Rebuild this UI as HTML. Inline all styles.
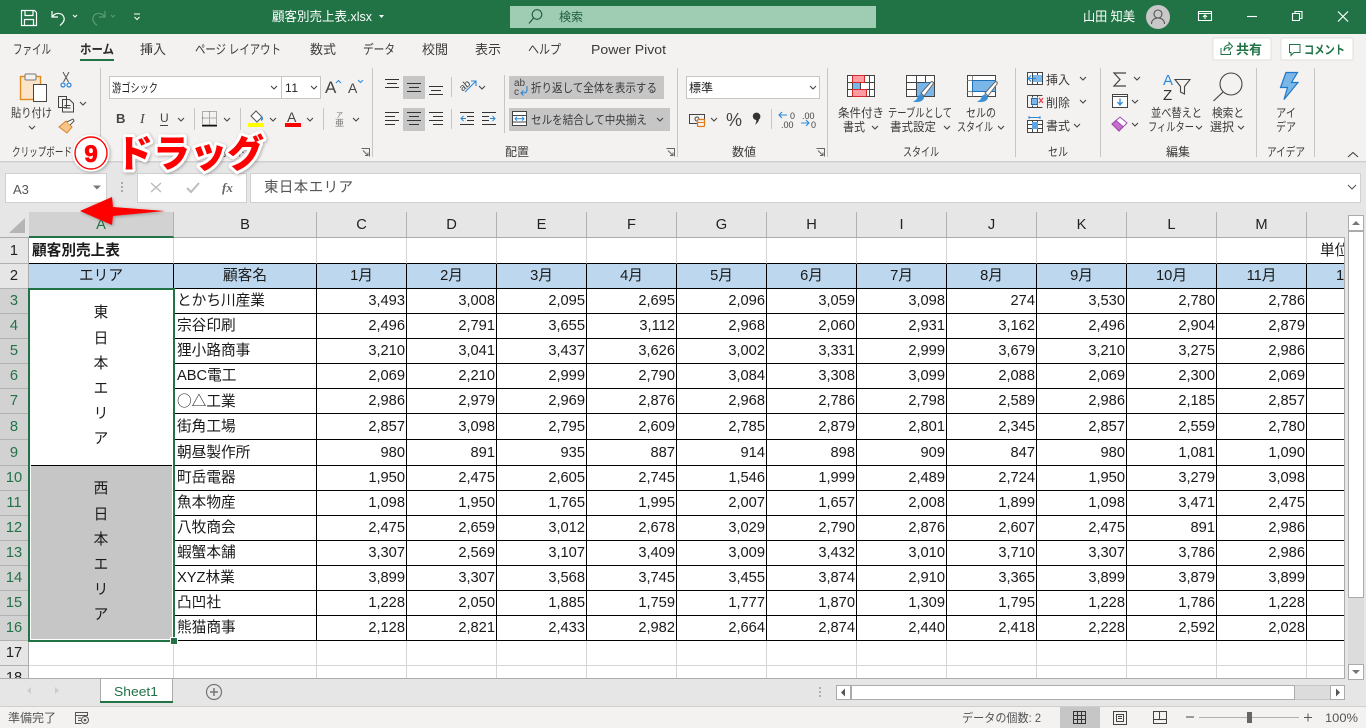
<!DOCTYPE html>
<html lang="ja"><head><meta charset="utf-8"><title>顧客別売上表.xlsx - Excel</title>
<style>
*{box-sizing:border-box}
html,body{margin:0;padding:0}
body{width:1366px;height:728px;overflow:hidden;position:relative;background:#e6e6e6;font-family:"Liberation Sans","Noto Sans CJK JP",sans-serif;color:#222}
.abs{position:absolute}
#ribbon,#over{position:absolute;left:0;top:0}
#ribbon text{font-family:"Liberation Sans","Noto Sans CJK JP",sans-serif;font-size:12px;fill:#3b3a39}
#ribbon text.tb{font-size:13px}
#clip{position:absolute;left:29px;top:238px;width:1315px;height:440px;overflow:hidden;background:#fff}
table{border-collapse:separate;border-spacing:0;table-layout:fixed;font-size:14.67px}
#g{width:1368px}
#g td{padding:0 1px 0 0;height:25px;line-height:24px;border-right:1px solid #d4d4d4;border-bottom:1px solid #d4d4d4;text-align:right;white-space:nowrap;overflow:hidden;color:#1a1a1a}
#g tr.k td{border-color:#000}
#g tr.r1 td{border-bottom-color:#000;height:26px;line-height:24px;padding-top:1px}
#g tr.t td{height:26px;line-height:24px;padding-top:1px}
#g td.l{text-align:left;padding-left:3px}
#g td.c{text-align:center;padding:0;background:#bdd7ee}
#g td.m{text-align:center;padding:0;line-height:25.2px;vertical-align:middle;white-space:normal}
#g td.m div{position:relative;top:0}
#rh{position:absolute;left:0;top:238px;width:29px;font-size:14.67px}
#rh div{height:25px;line-height:24px;text-align:center;border-bottom:1px solid #b1b1b1;background:#e6e6e6;color:#222;border-right:1px solid #ababab;width:29px}
#rh div.s{background:#d2d2d2;color:#217346}
#ch{position:absolute;left:0;top:212px;height:26px;width:1345px;background:#e6e6e6;border-bottom:1px solid #ababab}
#ch span{position:absolute;top:0;height:25px;line-height:27px;text-align:center;font-size:14.67px;border-right:1px solid #b1b1b1;color:#222}
#sel{position:absolute;left:28px;top:288px;width:147px;height:354px;border:2px solid #217346;box-shadow:inset 0 0 0 1px #fff}
#hd{position:absolute;left:171px;top:638px;width:6px;height:6px;background:#217346;outline:1px solid #fff}
</style></head>
<body>
<div id="ch">
<span style="left:29px;width:145px;background:#d2d2d2;color:#217346;height:26px;border-bottom:2px solid #217346">A</span>
<span style="left:174px;width:143px">B</span><span style="left:317px;width:90px">C</span><span style="left:407px;width:90px">D</span><span style="left:497px;width:90px">E</span><span style="left:587px;width:90px">F</span><span style="left:677px;width:90px">G</span><span style="left:767px;width:90px">H</span><span style="left:857px;width:90px">I</span><span style="left:947px;width:90px">J</span><span style="left:1037px;width:90px">K</span><span style="left:1127px;width:90px">L</span><span style="left:1217px;width:90px">M</span>
</div>
<div id="rh">
<div style="height:26px;line-height:26px">1</div><div>2</div>
<div class="s">3</div><div class="s">4</div><div class="s">5</div><div class="s">6</div><div class="s">7</div><div class="s" style="height:26px;line-height:26px">8</div><div class="s" style="height:26px;line-height:26px">9</div><div class="s">10</div><div class="s">11</div><div class="s">12</div><div class="s">13</div><div class="s">14</div><div class="s">15</div><div class="s">16</div><div>17</div><div style="height:13px;overflow:hidden;border:0;border-right:1px solid #ababab">18</div>
</div>
<div id="clip">
<table id="g"><colgroup><col style="width:145px"><col style="width:143px"><col style="width:90px"><col style="width:90px"><col style="width:90px"><col style="width:90px"><col style="width:90px"><col style="width:90px"><col style="width:90px"><col style="width:90px"><col style="width:90px"><col style="width:90px"><col style="width:90px"><col style="width:90px"></colgroup>
<tr class="r1"><td class="l" style="font-weight:bold">顧客別売上表<td><td><td><td><td><td><td><td><td><td><td><td><td class="l" style="padding-left:13px">単位：千円
<tr class="k"><td class="c">エリア<td class="c">顧客名<td class="c">1月<td class="c">2月<td class="c">3月<td class="c">4月<td class="c">5月<td class="c">6月<td class="c">7月<td class="c">8月<td class="c">9月<td class="c">10月<td class="c">11月<td class="c">12月
<tr class="k"><td class="m" rowspan="7"><div>東<br>日<br>本<br>エ<br>リ<br>ア</div><td class="l">とかち川産業<td>3,493<td>3,008<td>2,095<td>2,695<td>2,096<td>3,059<td>3,098<td>274<td>3,530<td>2,780<td>2,786<td>
<tr class="k"><td class="l">宗谷印刷<td>2,496<td>2,791<td>3,655<td>3,112<td>2,968<td>2,060<td>2,931<td>3,162<td>2,496<td>2,904<td>2,879<td>
<tr class="k"><td class="l">狸小路商事<td>3,210<td>3,041<td>3,437<td>3,626<td>3,002<td>3,331<td>2,999<td>3,679<td>3,210<td>3,275<td>2,986<td>
<tr class="k"><td class="l">ABC電工<td>2,069<td>2,210<td>2,999<td>2,790<td>3,084<td>3,308<td>3,099<td>2,088<td>2,069<td>2,300<td>2,069<td>
<tr class="k"><td class="l" style="font-family:'Noto Sans CJK JP',sans-serif">○△工業<td>2,986<td>2,979<td>2,969<td>2,876<td>2,968<td>2,786<td>2,798<td>2,589<td>2,986<td>2,185<td>2,857<td>
<tr class="k t"><td class="l">街角工場<td>2,857<td>3,098<td>2,795<td>2,609<td>2,785<td>2,879<td>2,801<td>2,345<td>2,857<td>2,559<td>2,780<td>
<tr class="k t"><td class="l">朝昼製作所<td>980<td>891<td>935<td>887<td>914<td>898<td>909<td>847<td>980<td>1,081<td>1,090<td>
<tr class="k"><td class="m" rowspan="7" style="background:#c6c6c6"><div>西<br>日<br>本<br>エ<br>リ<br>ア</div><td class="l">町岳電器<td>1,950<td>2,475<td>2,605<td>2,745<td>1,546<td>1,999<td>2,489<td>2,724<td>1,950<td>3,279<td>3,098<td>
<tr class="k"><td class="l">魚本物産<td>1,098<td>1,950<td>1,765<td>1,995<td>2,007<td>1,657<td>2,008<td>1,899<td>1,098<td>3,471<td>2,475<td>
<tr class="k"><td class="l">八牧商会<td>2,475<td>2,659<td>3,012<td>2,678<td>3,029<td>2,790<td>2,876<td>2,607<td>2,475<td>891<td>2,986<td>
<tr class="k"><td class="l">蝦蟹本舗<td>3,307<td>2,569<td>3,107<td>3,409<td>3,009<td>3,432<td>3,010<td>3,710<td>3,307<td>3,786<td>2,986<td>
<tr class="k"><td class="l">XYZ林業<td>3,899<td>3,307<td>3,568<td>3,745<td>3,455<td>3,874<td>2,910<td>3,365<td>3,899<td>3,879<td>3,899<td>
<tr class="k"><td class="l">凸凹社<td>1,228<td>2,050<td>1,885<td>1,759<td>1,777<td>1,870<td>1,309<td>1,795<td>1,228<td>1,786<td>1,228<td>
<tr class="k"><td class="l">熊猫商事<td>2,128<td>2,821<td>2,433<td>2,982<td>2,664<td>2,874<td>2,440<td>2,418<td>2,228<td>2,592<td>2,028<td>
<tr><td><td><td><td><td><td><td><td><td><td><td><td><td><td>
<tr><td><td><td><td><td><td><td><td><td><td><td><td><td><td>
</table>
</div>
<div class="abs" style="left:1344px;top:238px;width:1px;height:441px;background:#ababab"></div>
<div class="abs" style="left:0;top:678px;width:1345px;height:1px;background:#ababab"></div>
<div id="sel"></div><div id="hd"></div>

<svg id="ribbon" width="1366" height="728" viewBox="0 0 1366 728" xmlns="http://www.w3.org/2000/svg" style="pointer-events:none">
<defs>
<path id="c" d="M0 0l3 3 3-3" fill="none" stroke="#444" stroke-width="1.1"/>
</defs>
<!-- title bar -->
<rect width="1366" height="34" fill="#217346"/>
<rect y="34" width="1366" height="127" fill="#f3f2f1"/>
<rect y="161" width="1366" height="1" fill="#cfcfcf"/><rect y="162" width="1366" height="1" fill="#dcdcdc"/>
<g fill="none" stroke="#fff" stroke-width="1.2">
<path d="M21.5 10.5h13l2 2v13h-15z M25 10.5v5h8v-5 M24.5 25.5v-6h9v6"/>
<path d="M52 11v6h6 M52.5 16.5c3-4.500 10-4 11.500 1 1 4-2 6-4 8"/>
<path d="M73 15l2 2 2-2" stroke-width="1"/>
<path d="M134 14h6 M134.500 17l2.500 2.500 2.500-2.500" stroke-width="1"/>
</g>
<g fill="none" stroke="#5b9a78" stroke-width="1.2"><path d="M105 11v6h-6 M104.500 16.500c-3-4.500-10-4-11.500 1-1 4 2 6 4 8"/><path d="M111 15l2 2 2-2" stroke-width="1"/></g>
<text x="272" y="21" textLength="100" lengthAdjust="spacingAndGlyphs" style="fill:#fff" class="tb">顧客別売上表.xlsx</text>
<path d="M379 15h5l-2.500 3z" fill="#fff"/>
<rect x="510" y="6" width="366" height="22" fill="#9fcdb3"/>
<circle cx="537" cy="14.500" r="4.800" fill="none" stroke="#1f5c3c" stroke-width="1.100"/><path d="M533.500 18l-4.500 5.500" stroke="#1f5c3c" stroke-width="1.200"/>
<text x="559" y="21" textLength="24" lengthAdjust="spacingAndGlyphs" style="fill:#1f5c3c">検索</text>
<text x="1083" y="21" textLength="52" lengthAdjust="spacingAndGlyphs" style="fill:#fff" class="tb">山田 知美</text>
<circle cx="1158" cy="17" r="12" fill="#c8c8c8"/>
<circle cx="1158" cy="14" r="4" fill="none" stroke="#555" stroke-width="1.100"/><path d="M1151.500 24c0-4 3-6 6.500-6s6.500 2 6.500 6" fill="none" stroke="#555" stroke-width="1.100"/>
<g fill="none" stroke="#fff" stroke-width="1.100">
<path d="M1198.500 11.500h13v9h-13z M1198.500 13.500h13 M1205 19v-4 M1203 17l2-2 2 2"/>
<path d="M1247 16.500h10"/>
<path d="M1292.500 13.500h7v7h-7z M1295 13.500v-2h7v7h-2"/>
<path d="M1338 11.500l10 10 M1348 11.500l-10 10" stroke-width="1.200"/>
</g>
<!-- tabs -->
<text class="tb" x="13" y="54" textLength="38" lengthAdjust="spacingAndGlyphs">ファイル</text>
<text class="tb" x="80" y="54" textLength="34" lengthAdjust="spacingAndGlyphs" style="font-weight:bold;fill:#2b2b2b">ホーム</text>
<rect x="80" y="59" width="34" height="2" fill="#217346"/>
<text class="tb" x="140" y="54" textLength="26" lengthAdjust="spacingAndGlyphs">挿入</text>
<text class="tb" x="195" y="54" textLength="86" lengthAdjust="spacingAndGlyphs">ページ レイアウト</text>
<text class="tb" x="310" y="54" textLength="26" lengthAdjust="spacingAndGlyphs">数式</text>
<text class="tb" x="363" y="54" textLength="32" lengthAdjust="spacingAndGlyphs">データ</text>
<text class="tb" x="422" y="54" textLength="26" lengthAdjust="spacingAndGlyphs">校閲</text>
<text class="tb" x="475" y="54" textLength="26" lengthAdjust="spacingAndGlyphs">表示</text>
<text class="tb" x="528" y="54" textLength="33" lengthAdjust="spacingAndGlyphs">ヘルプ</text>
<text class="tb" x="591" y="54" textLength="75" lengthAdjust="spacingAndGlyphs">Power Pivot</text>
<!-- share/comment -->
<rect x="1213" y="38" width="58" height="22" rx="1" fill="#fff" stroke="#e1dfdd"/>
<rect x="1281" y="38" width="72" height="22" rx="1" fill="#fff" stroke="#e1dfdd"/>
<path d="M1221 48v6.500h9.500v-3 M1224 51c0-4 2-6 5-6v-2.500l3.500 4-3.500 3.500v-2.500c-2 0-4 1-5 3.500z" fill="none" stroke="#217346" stroke-width="1"/>
<text x="1236" y="54" textLength="26" lengthAdjust="spacingAndGlyphs" style="font-weight:bold;fill:#217346;font-size:13px">共有</text>
<path d="M1289.500 44.500h10.500v8h-6l-3 3v-3h-1.500z" fill="none" stroke="#217346" stroke-width="1"/>
<text x="1304" y="54" textLength="41" lengthAdjust="spacingAndGlyphs" style="font-weight:bold;fill:#217346">コメント</text>
<!-- separators -->
<g fill="#c6c6c6">
<rect x="100" y="68" width="1" height="89"/><rect x="372" y="68" width="1" height="89"/><rect x="677" y="68" width="1" height="89"/><rect x="827" y="68" width="1" height="89"/><rect x="1015" y="68" width="1" height="89"/><rect x="1100" y="68" width="1" height="89"/><rect x="1256" y="68" width="1" height="89"/><rect x="1314" y="68" width="1" height="89"/>
<rect x="504" y="75" width="1" height="58"/><rect x="451" y="77" width="1" height="20"/><rect x="451" y="109" width="1" height="20"/>
<rect x="194" y="108" width="1" height="22"/><rect x="240" y="108" width="1" height="22"/><rect x="323" y="108" width="1" height="22"/><rect x="771" y="109" width="1" height="20"/>
</g>
<!-- clipboard -->
<rect x="20.500" y="76.500" width="20" height="23" fill="#fbe3c7" stroke="#e08a1e" stroke-width="1.400"/>
<rect x="25" y="74" width="11" height="6" rx="1" fill="#f3f2f1" stroke="#777"/>
<rect x="33.500" y="84.500" width="13" height="17" fill="#fff" stroke="#444"/>
<text x="11" y="117" textLength="41" lengthAdjust="spacingAndGlyphs">貼り付け</text>
<use href="#c" x="29" y="126"/>
<g fill="none" stroke="#555" stroke-width="1"><path d="M63 72l5.500 10 M69 72l-5.500 10"/></g>
<circle cx="63" cy="85" r="2" fill="none" stroke="#2b88d8" stroke-width="1.200"/><circle cx="69" cy="85" r="2" fill="none" stroke="#2b88d8" stroke-width="1.200"/>
<path d="M58.500 96.500h8l0 11h-8z M62.500 99.500h7l4 4v8.500h-11z" fill="#f3f2f1" stroke="#444"/>
<path d="M64.500 105.500h6 M64.500 108h6" stroke="#444"/>
<use href="#c" x="80" y="102"/>
<path d="M59 127l7-6 6 6-5 6z" fill="#f7c58a" stroke="#d9812a"/><path d="M67 122l6-3 1 2-4 4" fill="#fff" stroke="#555"/>
<text x="12" y="156" textLength="60" lengthAdjust="spacingAndGlyphs">クリップボード</text>
<!-- font -->
<rect x="109.500" y="76.500" width="172" height="22" fill="#fff" stroke="#c6c6c6"/>
<rect x="281.500" y="76.500" width="39" height="22" fill="#fff" stroke="#c6c6c6"/>
<text x="112" y="92" textLength="46" lengthAdjust="spacingAndGlyphs" style="fill:#222">游ゴシック</text>
<use href="#c" x="271" y="86"/>
<text x="285" y="92" textLength="13" style="fill:#222">11</text>
<use href="#c" x="311" y="86"/>
<text x="325" y="93" style="font-size:17px;fill:#444">A</text><path d="M336 83l2.500-2.500 2.500 2.500" fill="none" stroke="#2b88d8"/>
<text x="348" y="93" style="font-size:14px;fill:#444">A</text><path d="M358 80l2.500 2.500 2.500-2.500" fill="none" stroke="#2b88d8"/>
<text x="116" y="123" style="font-weight:bold;font-size:13px;fill:#444">B</text>
<text x="140" y="123" style="font-family:'Liberation Serif',serif;font-style:italic;font-size:14px;fill:#444">I</text>
<text x="160" y="122" style="font-size:12px;fill:#444">U</text><rect x="160" y="125" width="8" height="1" fill="#444"/>
<use href="#c" x="178" y="118"/>
<path d="M202.500 111.500h14v13h-14z M209.500 111.500v13 M202.500 118h14" fill="none" stroke="#666" stroke-dasharray="1 1"/><rect x="202" y="125" width="15" height="1.500" fill="#111"/>
<use href="#c" x="224" y="118"/>
<path d="M251 116l5-5 6 6-5 5z" fill="#fff" stroke="#555"/><path d="M261 116c2 2 1.500 4 0 4" fill="none" stroke="#2b88d8" stroke-width="1.500"/>
<rect x="248" y="123" width="16" height="4" fill="#ffff00"/>
<use href="#c" x="270" y="118"/>
<text x="287" y="122" style="font-size:14px;fill:#444">A</text><rect x="285" y="123" width="16" height="4" fill="#ff0000"/>
<use href="#c" x="307" y="118"/>
<text x="336" y="117" style="font-size:7px;fill:#777">ア</text><text x="335" y="126" style="font-size:9px;fill:#777">亜</text>
<use href="#c" x="353" y="118"/>
<path d="M361.500 148.500h8v8 M363 150.500l5 5 M368 152.500v3h-3" fill="none" stroke="#666"/>
<text x="220" y="156" textLength="25" lengthAdjust="spacingAndGlyphs">ォント</text>
<!-- alignment -->
<rect x="403" y="76" width="22" height="23" fill="#c6c6c6"/><rect x="403" y="108" width="22" height="23" fill="#c6c6c6"/>
<g stroke="#333" stroke-width="1" fill="none">
<path d="M385 79.500h14 M387 83.500h10 M385 87.500h14"/>
<path d="M407 83.500h14 M409 87.500h10 M407 91.500h14"/>
<path d="M429 86.500h14 M431 90.500h10 M429 94.500h14"/>
<path d="M385 112.500h14 M385 116.500h10 M385 120.500h14 M385 124.500h10"/>
<path d="M407 112.500h14 M409 116.500h10 M407 120.500h14 M409 124.500h10"/>
<path d="M429 112.500h14 M433 116.500h10 M429 120.500h14 M433 124.500h10"/>
<path d="M460 112.500h14 M467 116.500h7 M467 120.500h7 M460 124.500h14"/>
<path d="M482 112.500h14 M482 116.500h7 M482 120.500h7 M482 124.500h14"/>
</g>
<path d="M466 118.500h-5 M463.500 116l-2.500 2.500 2.500 2.500 M490 118.500h5 M492.500 116l2.500 2.500-2.500 2.500" fill="none" stroke="#2b88d8"/>
<text x="459" y="90" transform="rotate(-40 463 86)" style="font-size:10px;fill:#444">ab</text>
<path d="M465 92l11-11 M471 81h5v5" fill="none" stroke="#2b88d8" stroke-width="1.100"/>
<use href="#c" x="479" y="86"/>
<!-- wrap / merge -->
<rect x="509" y="76" width="155" height="23" fill="#c6c6c6"/>
<rect x="509" y="108" width="161" height="23" fill="#c6c6c6"/>
<text x="514" y="86" style="font-size:10px;fill:#444">ab</text><text x="514" y="95" style="font-size:10px;fill:#444">c</text>
<path d="M527 86v4c0 3-2 3-6 3 M523.500 90.500l-2.500 2.500 2.500 2.500" fill="none" stroke="#2b88d8" stroke-width="1.100"/>
<text x="531" y="92" textLength="126" lengthAdjust="spacingAndGlyphs">折り返して全体を表示する</text>
<rect x="512.500" y="111.500" width="14" height="14" fill="#fff" stroke="#444"/><path d="M512.500 115.500h14 M512.500 122h14" stroke="#444"/><path d="M515 118.700h9 M517 116.700l-2 2 2 2 M522 116.700l2 2-2 2" fill="none" stroke="#2b88d8"/>
<text x="531" y="124" textLength="116" lengthAdjust="spacingAndGlyphs">セルを結合して中央揃え</text>
<use href="#c" x="657" y="118"/>
<text x="505" y="156" textLength="24">配置</text>
<path d="M666.500 148.500h8v8 M668 150.500l5 5 M673 152.500v3h-3" fill="none" stroke="#666"/>
<!-- number -->
<rect x="686.500" y="76.500" width="133" height="22" fill="#fff" stroke="#c6c6c6"/>
<text x="689" y="92" textLength="24" style="fill:#222">標準</text>
<use href="#c" x="810" y="86"/>
<rect x="689.500" y="114.500" width="15" height="9" fill="none" stroke="#444"/><circle cx="697" cy="119" r="2" fill="none" stroke="#444"/>
<rect x="697.500" y="119.500" width="7" height="7" rx="1" fill="#f3f2f1" stroke="#e07b1a" stroke-width="1.200"/><path d="M697.500 122.500h7" stroke="#e07b1a"/>
<use href="#c" x="711" y="118"/>
<text x="726" y="126" style="font-size:18px;fill:#444">%</text>
<path d="M754 113.500a3.800 3.800 0 1 1 5 6c-.3 2-1.800 4-4 5.200 1-1.800 1.500-3.200 1.200-4.700a3.800 3.800 0 0 1-2.200-6.500z" fill="#333"/>
<path d="M787 115h-8 M782 112l-3 3 3 3" fill="none" stroke="#2b88d8" stroke-width="1.100"/>
<text x="790" y="119" style="font-size:9px;fill:#444">0</text><text x="781" y="128" style="font-size:9px;fill:#444">.00</text>
<text x="802" y="119" style="font-size:9px;fill:#444">.00</text>
<path d="M801 123h8 M806 120l3 3-3 3" fill="none" stroke="#2b88d8" stroke-width="1.100"/><text x="811" y="128" style="font-size:9px;fill:#444">0</text>
<text x="732" y="156" textLength="24">数値</text>
<path d="M816.500 148.500h8v8 M818 150.500l5 5 M823 152.500v3h-3" fill="none" stroke="#666"/>
<!-- cond formatting -->
<rect x="847.500" y="75.500" width="27" height="21" fill="#fff"/>
<rect x="852.500" y="82.500" width="8" height="7" fill="#7ab7e8" stroke="#2b78c4"/>
<path d="M847.500 75.500h27v21h-27z M847.500 82.500h27 M847.500 89.500h27 M852.500 75.500v21 M860.500 75.500v21 M869.500 75.500v21" fill="none" stroke="#444"/>
<rect x="852.500" y="75.500" width="12" height="7" fill="#ff9ba1" stroke="#d42a2a"/>
<rect x="852.500" y="89.500" width="14" height="7" fill="#ff9ba1" stroke="#d42a2a"/>
<text x="838" y="117" textLength="46" lengthAdjust="spacingAndGlyphs">条件付き</text>
<text x="843" y="131" textLength="22" lengthAdjust="spacingAndGlyphs">書式</text><use href="#c" x="872" y="126"/>
<!-- table fmt -->
<rect x="906.500" y="75.500" width="28" height="21" fill="#fff"/>
<rect x="916.500" y="82.500" width="18" height="14" fill="#7ab7e8" stroke="#1f6fb8"/>
<path d="M906.500 75.500h28v21h-28z M906.500 82.500h18 M906.500 89.500h10 M916.500 75.500v7 M925.500 75.500v7 M916.500 82.500v14" fill="none" stroke="#444" stroke-width="1"/>
<path d="M921 93l10-11c1-1 3 0 2 2l-9 12z" fill="#fff" stroke="#666"/>
<path d="M913 101c3 0 4-2 5-5l3-2 3 3c0 3-3 5-7 5-2 0-3 0-4-1z" fill="#3a8fd6"/>
<text x="888" y="117" textLength="64" lengthAdjust="spacingAndGlyphs">テーブルとして</text>
<text x="890" y="131" textLength="46" lengthAdjust="spacingAndGlyphs">書式設定</text><use href="#c" x="944" y="126"/>
<!-- cell style -->
<rect x="967.500" y="75.500" width="28" height="21" fill="#fff" stroke="#444"/>
<path d="M967.500 80.500h28 M967.500 91.500h28 M972.500 75.500v21" fill="none" stroke="#888"/>
<rect x="972.500" y="80.500" width="23" height="11" fill="#7ab7e8" stroke="#1f6fb8"/>
<path d="M985 93l10-11c1-1 3 0 2 2l-9 12z" fill="#fff" stroke="#666"/>
<path d="M977 101c3 0 4-2 5-5l3-2 3 3c0 3-3 5-7 5-2 0-3 0-4-1z" fill="#3a8fd6"/>
<text x="966" y="117" textLength="30" lengthAdjust="spacingAndGlyphs">セルの</text>
<text x="957" y="131" textLength="36" lengthAdjust="spacingAndGlyphs">スタイル</text><use href="#c" x="998" y="126"/>
<text x="903" y="156" textLength="36" lengthAdjust="spacingAndGlyphs">スタイル</text>
<!-- cells -->
<path d="M1027.500 72.500h15v12h-15z M1027.500 78.500h15 M1032.500 72.500v12 M1037.500 72.500v12" fill="#fff" stroke="#444"/>
<rect x="1033" y="75" width="9" height="7" fill="#7ab7e8"/>
<path d="M1036 78.500h-8 M1031 75.500l-3 3 3 3" fill="none" stroke="#2b88d8" stroke-width="1.200"/>
<text x="1046" y="84" textLength="24">挿入</text><use href="#c" x="1080" y="77"/>
<path d="M1027.500 95.500h15 M1027.500 107.500h15 M1027.500 95.500v12 M1032.500 95.500v2 M1037.500 95.500v2 M1032.500 105.500v2 M1037.500 105.500v2" fill="none" stroke="#444"/>
<rect x="1031.500" y="98.500" width="6" height="6" fill="#7ab7e8" stroke="#1f6fb8"/>
<path d="M1039 98l4 5 M1043 98l-4 5" stroke="#e8414e" stroke-width="1.300"/>
<text x="1046" y="107" textLength="24">削除</text><use href="#c" x="1080" y="100"/>
<path d="M1027.500 120.500h15v12h-15z M1027.500 124.500h15 M1027.500 128.500h15 M1032.500 120.500v12 M1037.500 120.500v12" fill="#fff" stroke="#444"/>
<rect x="1032" y="122" width="6" height="7" fill="#5aa5e2"/>
<path d="M1029 117.500h11 M1029 116v3 M1040 116v3" stroke="#2b88d8" fill="none"/>
<text x="1046" y="130" textLength="24">書式</text><use href="#c" x="1074" y="124"/>
<text x="1048" y="156" textLength="20" lengthAdjust="spacingAndGlyphs">セル</text>
<!-- editing -->
<path d="M1126 73h-12l6 6.500-6 6.500h12" fill="none" stroke="#444" stroke-width="1.200"/><use href="#c" x="1134" y="77"/>
<rect x="1112.500" y="94.500" width="15" height="13" fill="#fff" stroke="#444"/><path d="M1112.500 96.500h15" stroke="#444"/>
<path d="M1120 98.500v6 M1117.500 102l2.500 3 2.500-3" fill="none" stroke="#2b88d8" stroke-width="1.300"/><use href="#c" x="1132" y="100"/>
<path d="M1112 124l8-7 7 6-8 8z" fill="#fff" stroke="#a447b0"/><path d="M1112 124l4-3.500 7 6-4 4.500z" fill="#c36fcb" stroke="#a447b0"/><use href="#c" x="1132" y="123"/>
<text x="1163" y="85" style="font-size:15px;fill:#2b88d8">A</text>
<text x="1163" y="100" style="font-size:15px;fill:#333">Z</text>
<path d="M1175 79.500h15l-5.500 7v7.500l-4-2v-5.500z" fill="none" stroke="#444" stroke-width="1.100"/>
<text x="1151" y="117" textLength="51" lengthAdjust="spacingAndGlyphs">並べ替えと</text>
<text x="1148" y="131" textLength="46" lengthAdjust="spacingAndGlyphs">フィルター</text><use href="#c" x="1196" y="126"/>
<circle cx="1231" cy="84" r="11" fill="#f3f2f1" stroke="#444" stroke-width="1.100"/><path d="M1223 92l-9.500 9" stroke="#444" stroke-width="1.200"/>
<text x="1212" y="117" textLength="32" lengthAdjust="spacingAndGlyphs">検索と</text>
<text x="1210" y="131" textLength="24">選択</text><use href="#c" x="1238" y="126"/>
<text x="1166" y="156" textLength="24">編集</text>
<!-- ideas -->
<path d="M1286 72.500h11.500l-6 10h6.500l-14 17 3.500-12h-7z" fill="#7ab7e8" stroke="#1f78c8" stroke-width="1.200"/>
<text x="1276" y="117" textLength="20" lengthAdjust="spacingAndGlyphs">アイ</text>
<text x="1276" y="131" textLength="20" lengthAdjust="spacingAndGlyphs">デア</text>
<text x="1267" y="156" textLength="38" lengthAdjust="spacingAndGlyphs">アイデア</text>
<path d="M1348 157l5-4.500 5 4.500" fill="none" stroke="#444" stroke-width="1.100"/>
<!-- formula bar -->
<rect x="5.500" y="173.500" width="101" height="29" fill="#fff" stroke="#d0d0d0"/>
<text x="13" y="194" style="font-size:13px;fill:#555">A3</text>
<path d="M93 185.500h8l-4 4z" fill="#777"/>
<g fill="#aaa"><rect x="121" y="182" width="2" height="2"/><rect x="121" y="186" width="2" height="2"/><rect x="121" y="190" width="2" height="2"/></g>
<rect x="137.500" y="173.500" width="109" height="29" fill="#fff" stroke="#d0d0d0"/>
<rect x="250.500" y="173.500" width="1110" height="29" fill="#fff" stroke="#d0d0d0"/>
<path d="M151 183l10 9 M161 183l-10 9" stroke="#bdbdbd" stroke-width="1.500"/>
<path d="M187 188l4 4 8-9" fill="none" stroke="#bdbdbd" stroke-width="2"/>
<text x="222" y="192" style="font-family:'Liberation Serif',serif;font-style:italic;font-weight:bold;font-size:13px;fill:#666">fx</text>
<text x="264" y="192" textLength="89" style="font-size:14.500px;fill:#555">東日本エリア</text>
<path d="M1347 185l4 4 4-4" fill="none" stroke="#555" stroke-width="1.100" transform="translate(1)"/>
<!-- corner -->
<path d="M25 218v15H9z" fill="#b5b5b5"/>
<!-- v scrollbar -->
<rect x="1348" y="215" width="16" height="465" fill="#dcdcdc"/>
<rect x="1348.500" y="215.500" width="15" height="15" fill="#fff" stroke="#ababab"/>
<path d="M1352 225h8l-4-4z" fill="#777"/>
<rect x="1348.500" y="231.500" width="15" height="366" fill="#fff" stroke="#ababab"/>
<rect x="1348.500" y="664.500" width="15" height="15" fill="#fff" stroke="#ababab"/>
<path d="M1352 670h8l-4 4z" fill="#777"/>
<!-- bottom tabs -->
<rect x="0" y="679" width="1345" height="27" fill="#e6e6e6"/>
<rect x="1345" y="679" width="3" height="27" fill="#e6e6e6"/>
<rect x="0" y="706" width="1366" height="1" fill="#cfcfcf"/>
<rect x="0" y="707" width="1366" height="21" fill="#f3f2f1"/>
<path d="M31 687v7l-4-3.500z M55 687v7l4-3.500z" fill="#cdcdcd"/>
<path d="M100.500 679v23h72v-23" fill="#fff" stroke="#ababab"/>
<rect x="100" y="701" width="73" height="2" fill="#217346"/>
<text x="114" y="696" textLength="44" lengthAdjust="spacingAndGlyphs" style="font-size:13px;fill:#217346">Sheet1</text>
<circle cx="214" cy="692" r="7.500" fill="none" stroke="#777" stroke-width="1.200"/><path d="M214 688v8 M210 692h8" stroke="#777" stroke-width="1.500"/>
<g fill="#b0b0b0"><rect x="819" y="687" width="2" height="2"/><rect x="819" y="691" width="2" height="2"/><rect x="819" y="695" width="2" height="2"/></g>
<!-- h scrollbar -->
<rect x="836.500" y="685.500" width="508" height="14" fill="#dcdcdc" stroke="#ababab" stroke-opacity=".5"/>
<rect x="836.500" y="685.500" width="14" height="14" fill="#fff" stroke="#ababab"/>
<path d="M845 688.500v8l-4-4z" fill="#555"/>
<rect x="851.500" y="685.500" width="443" height="14" fill="#fff" stroke="#ababab"/>
<rect x="1330.500" y="685.500" width="14" height="14" fill="#fff" stroke="#ababab"/>
<path d="M1336 688.500v8l4-4z" fill="#555"/>
<!-- status -->
<text x="8" y="722" textLength="48" style="fill:#555">準備完了</text>
<path d="M75.500 712.500h12v3h-12z M75.500 715.500v8h6 M78 718h3 M78 720.500h3" fill="none" stroke="#555"/>
<circle cx="85" cy="720" r="3.500" fill="none" stroke="#555"/><circle cx="85" cy="720" r="1.300" fill="#555"/>
<text x="962" y="722" textLength="79" lengthAdjust="spacingAndGlyphs" style="fill:#555">データの個数: 2</text>
<rect x="1060" y="707" width="40" height="21" fill="#c6c6c6"/>
<path d="M1073.500 711.500h12v12h-12z M1073.500 715.500h12 M1073.500 719.500h12 M1077.500 711.500v12 M1081.500 711.500v12" fill="none" stroke="#333"/>
<path d="M1113.500 711.500h13v13h-13z M1116.500 714.500h7v7h-7z M1118 716.500h4 M1118 718.500h4" fill="none" stroke="#444"/>
<path d="M1153.500 711.500h13v12h-13z M1153.500 719.500h6v-8 M1160 719.500h6.500" fill="none" stroke="#444"/>
<rect x="1186" y="716.500" width="8" height="1" fill="#444"/>
<rect x="1199" y="717" width="100" height="1" fill="#b0b0b0"/>
<rect x="1247" y="712" width="5" height="11" fill="#666"/>
<path d="M1304 717.500h8 M1308 713.500v8" stroke="#555"/>
<text x="1325" y="722" textLength="33" lengthAdjust="spacingAndGlyphs" style="fill:#555">100%</text>
</svg>

<svg id="over" width="1366" height="728" viewBox="0 0 1366 728" xmlns="http://www.w3.org/2000/svg" style="pointer-events:none">
<defs><filter id="sh" x="-20%" y="-20%" width="140%" height="140%"><feDropShadow dx="1" dy="1" stdDeviation="1.500" flood-color="#000" flood-opacity=".3"/></filter></defs>
<g filter="url(#sh)">
<circle cx="91" cy="153" r="18.500" fill="#fff"/>
<circle cx="91" cy="153" r="16" fill="#fff" stroke="#f00" stroke-width="1.400"/>
<text x="91" y="162" text-anchor="middle" style="font-family:'Liberation Sans',sans-serif;font-weight:bold;font-size:24px;fill:#f00;stroke:#f00;stroke-width:.8">9</text>
<text x="116" y="167" textLength="148" lengthAdjust="spacingAndGlyphs" style="font-family:'Noto Sans CJK JP',sans-serif;font-weight:900;font-size:38px;fill:#f00;stroke:#fff;stroke-width:6px;paint-order:stroke;stroke-linejoin:round">ドラッグ</text>
<path d="M80 211l32-14 1 10 52 4-52 5-1 9z" fill="#f00"/>
</g>
</svg>
</body></html>
